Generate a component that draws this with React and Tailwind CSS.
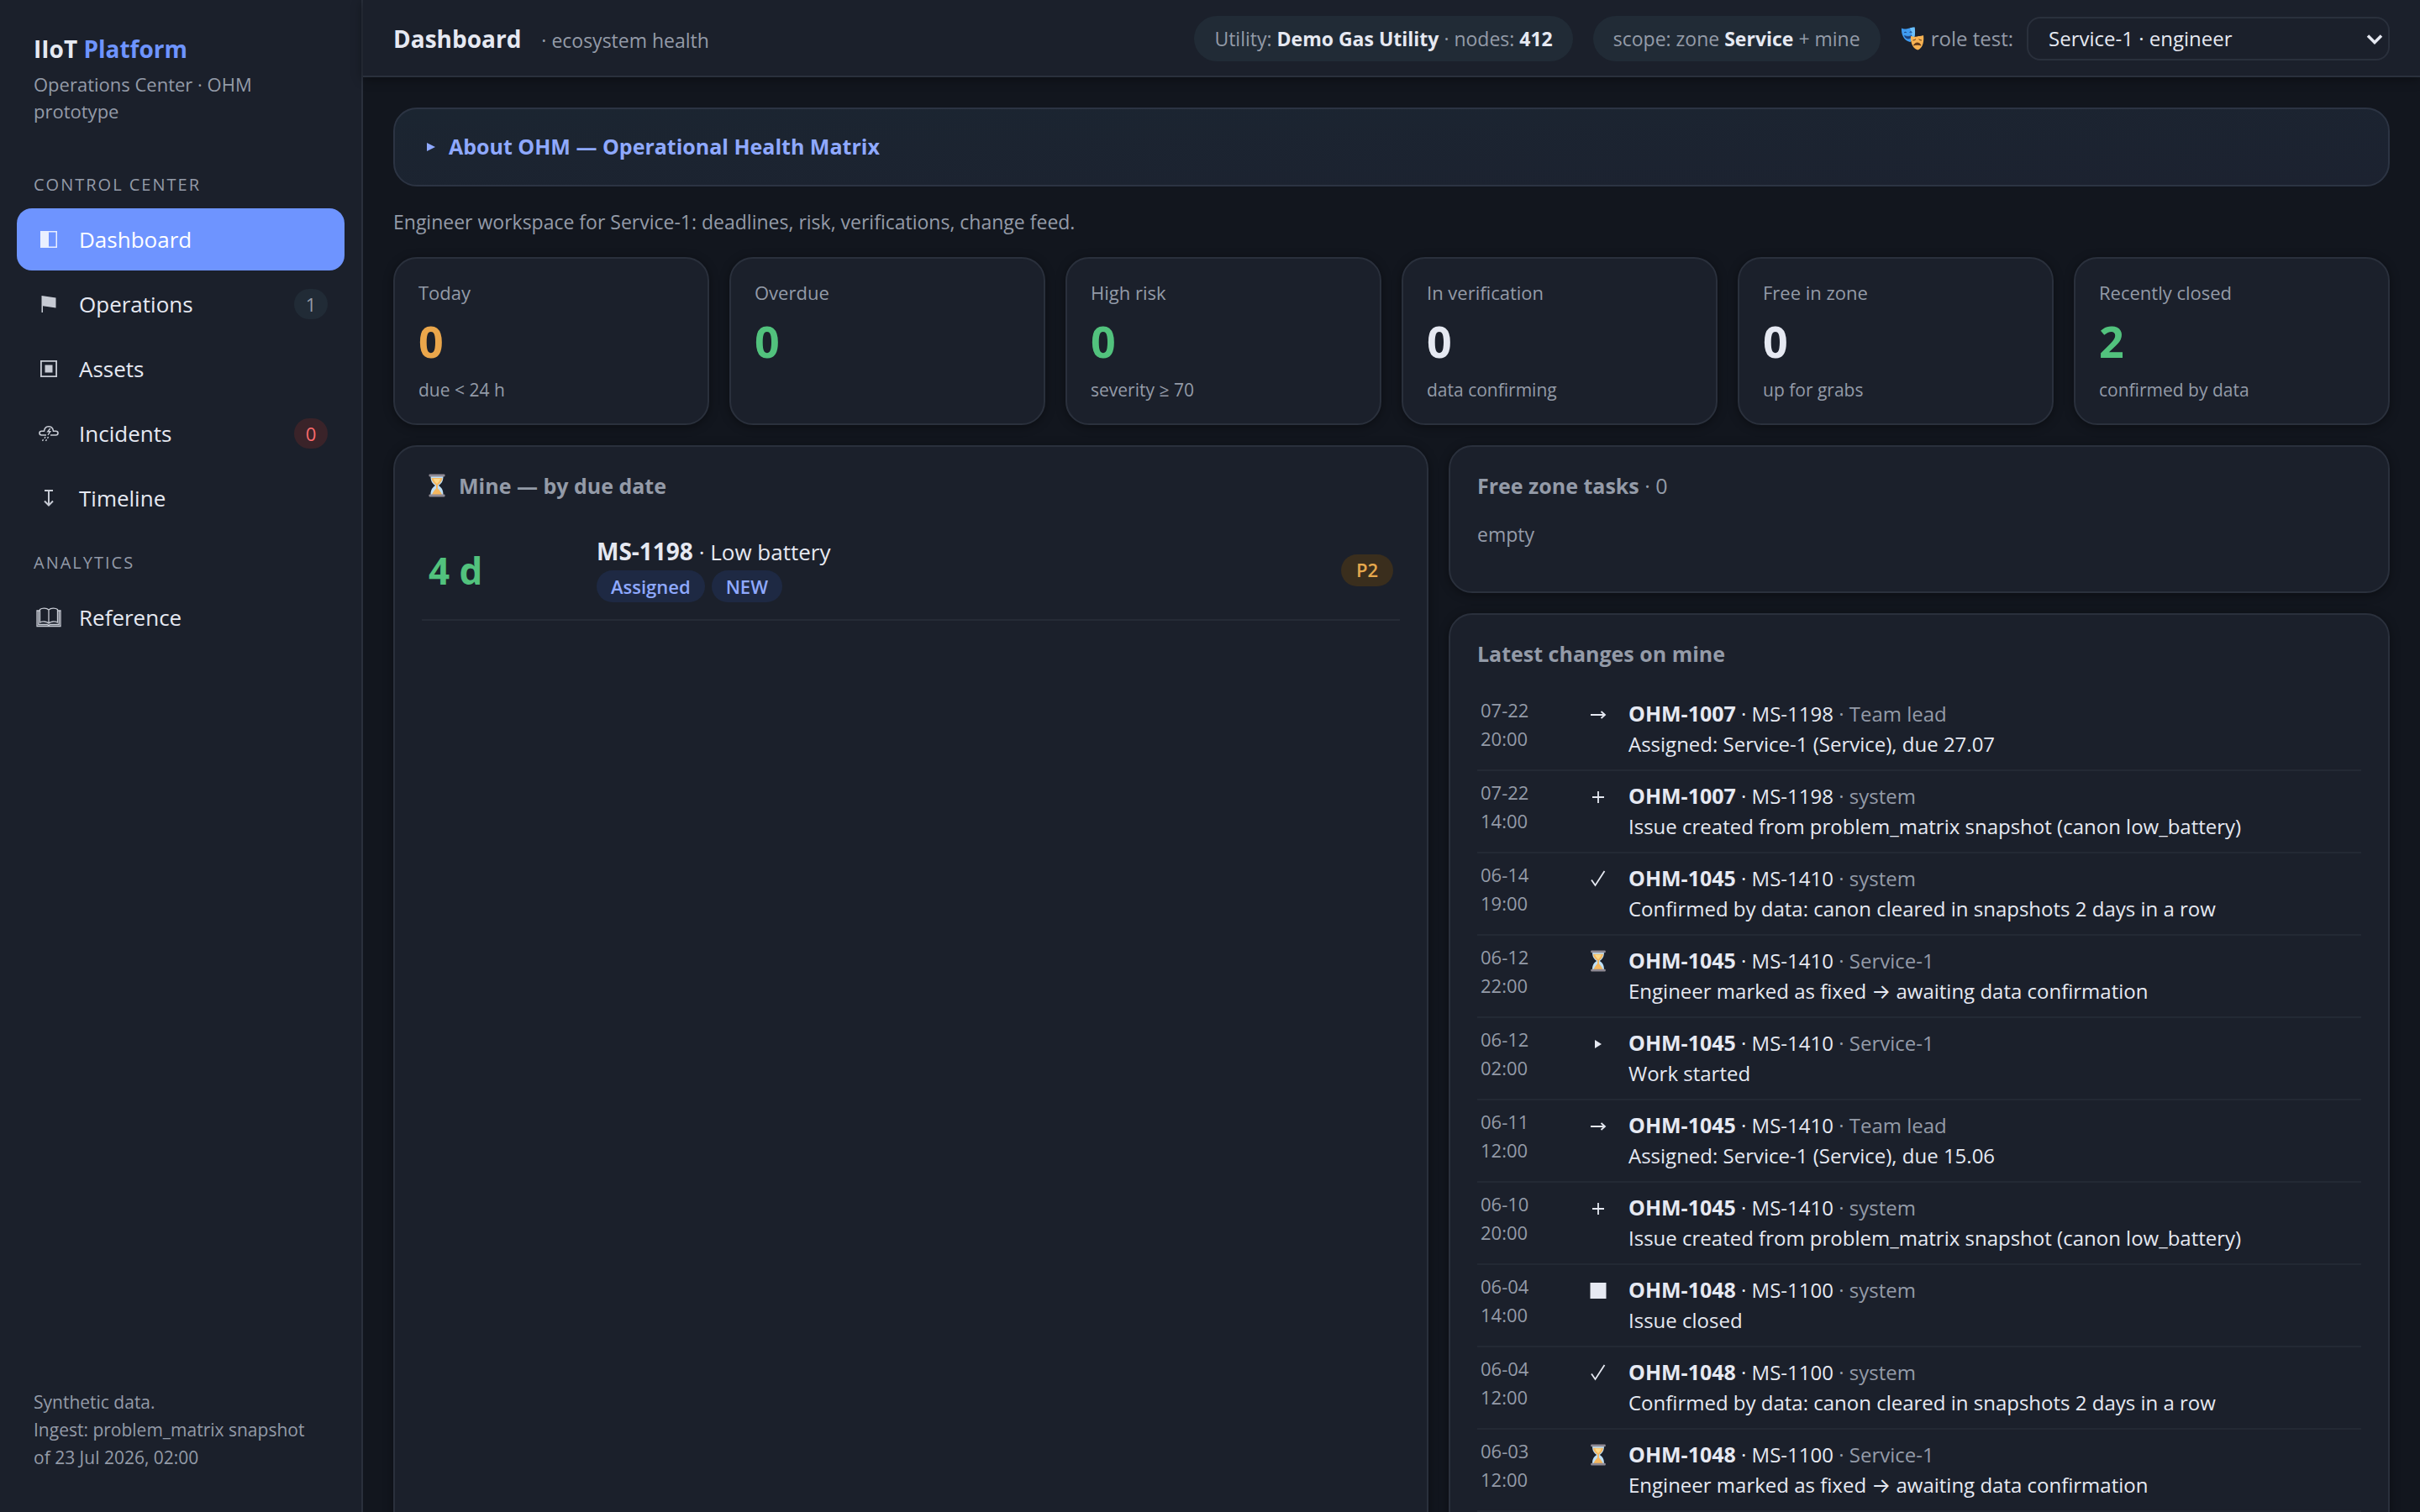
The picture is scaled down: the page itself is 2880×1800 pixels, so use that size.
import { useState } from 'react';

const navGroups = [
  {
    label: 'Control center',
    items: [
      { id: 'dashboard', name: 'Dashboard', Icon: PanelIcon },
      { id: 'operations', name: 'Operations', Icon: FlagIcon, badge: 1 },
      { id: 'assets', name: 'Assets', Icon: AssetIcon },
      { id: 'incidents', name: 'Incidents', Icon: StormIcon, badge: 0, alert: true },
      { id: 'timeline', name: 'Timeline', Icon: TimelineIcon },
    ],
  },
  {
    label: 'Analytics',
    items: [{ id: 'reference', name: 'Reference', Icon: BookIcon }],
  },
];

const stats = [
  { label: 'Today', value: 0, hint: 'due < 24 h', color: 'text-[#eaa64b]' },
  { label: 'Overdue', value: 0, hint: '', color: 'text-[#52c27d]' },
  { label: 'High risk', value: 0, hint: 'severity ≥ 70', color: 'text-[#52c27d]' },
  { label: 'In verification', value: 0, hint: 'data confirming', color: 'text-[#e6e9f2]' },
  { label: 'Free in zone', value: 0, hint: 'up for grabs', color: 'text-[#e6e9f2]' },
  { label: 'Recently closed', value: 2, hint: 'confirmed by data', color: 'text-[#52c27d]' },
];

const created = 'Issue created from problem_matrix snapshot (canon low_battery)';
const confirmed = 'Confirmed by data: canon cleared in snapshots 2 days in a row';
const waiting = 'Engineer marked as fixed → awaiting data confirmation';

const changes = [
  { day: '07-22', time: '20:00', kind: 'assigned', issue: 'OHM-1007', node: 'MS-1198', by: 'Team lead', text: 'Assigned: Service-1 (Service), due 27.07' },
  { day: '07-22', time: '14:00', kind: 'created', issue: 'OHM-1007', node: 'MS-1198', by: 'system', text: created },
  { day: '06-14', time: '19:00', kind: 'confirmed', issue: 'OHM-1045', node: 'MS-1410', by: 'system', text: confirmed },
  { day: '06-12', time: '22:00', kind: 'waiting', issue: 'OHM-1045', node: 'MS-1410', by: 'Service-1', text: waiting },
  { day: '06-12', time: '02:00', kind: 'started', issue: 'OHM-1045', node: 'MS-1410', by: 'Service-1', text: 'Work started' },
  { day: '06-11', time: '12:00', kind: 'assigned', issue: 'OHM-1045', node: 'MS-1410', by: 'Team lead', text: 'Assigned: Service-1 (Service), due 15.06' },
  { day: '06-10', time: '20:00', kind: 'created', issue: 'OHM-1045', node: 'MS-1410', by: 'system', text: created },
  { day: '06-04', time: '14:00', kind: 'closed', issue: 'OHM-1048', node: 'MS-1100', by: 'system', text: 'Issue closed' },
  { day: '06-04', time: '12:00', kind: 'confirmed', issue: 'OHM-1048', node: 'MS-1100', by: 'system', text: confirmed },
  { day: '06-03', time: '12:00', kind: 'waiting', issue: 'OHM-1048', node: 'MS-1100', by: 'Service-1', text: waiting },
];

function PanelIcon() {
  return (
    <svg viewBox="0 0 20 20" className="h-5 w-5" fill="currentColor">
      <path d="M0 0h20v20H0z M10 1.5v17h8.5v-17z" fillRule="evenodd" />
    </svg>
  );
}

function FlagIcon() {
  return (
    <svg viewBox="0 0 20 20" className="h-5 w-5" fill="currentColor">
      <path d="M1.5 0L18.5 2.5V14.5L3 12.2V20H1.5z" />
    </svg>
  );
}

function AssetIcon() {
  return (
    <svg viewBox="0 0 20 20" className="h-5 w-5" fill="currentColor">
      <path d="M0 0h20v20H0z M1.8 1.8v16.4h16.4V1.8z" fillRule="evenodd" />
      <path d="M5.5 5.5h9v9h-9z" />
    </svg>
  );
}

function StormIcon() {
  return (
    <svg viewBox="0 0 24 20" className="h-5 w-6" fill="none" stroke="currentColor" strokeWidth="1.6">
      <path d="M9 12H3.500a2.500 2.400 0 0 1 0-4.800H6.500C7 3.500 9 1.800 12 1.800s5 1.700 5.500 5.400h3a2.500 2.400 0 0 1 0 4.800H14" />
      <path d="M13.800 4l-3 3.800h3l-2.800 4" strokeWidth="1.4" />
      <path d="M8 14l-1 1.800M11.500 14l-1 1.800M5.500 17.200l-1 1.800M9.500 17.200l-1 1.800" strokeWidth="1.4" />
    </svg>
  );
}

function TimelineIcon() {
  return (
    <svg viewBox="0 0 20 20" className="h-5 w-5" fill="none" stroke="currentColor" strokeWidth="2">
      <path d="M5 1h10M10 1v17.500M5 13.500l5 5 5-5" />
    </svg>
  );
}

function BookIcon() {
  return (
    <svg viewBox="0 0 30 24" className="h-6 w-[30px]" fill="none" stroke="currentColor" strokeWidth="1.3">
      <path d="M15 3C12.500.500 7 .500 4.500 2.500v15.500c3-1.500 8-1.500 10.500 1 2.500-2.500 7.500-2.500 10.500-1V2.500C23 .500 17.500.500 15 3zM15 3v16" />
      <path d="M4.500 4H1v18.500h28V4h-3.500M2.800 4v16.500h10.500l1.700 1 1.700-1h10.500V4" />
    </svg>
  );
}

function Hourglass({ className }) {
  return (
    <svg viewBox="0 0 20 28" className={className}>
      <path d="M2.500 3h15c0 5.500-1.500 8-5.500 11 4 3 5.500 5.500 5.500 11h-15c0-5.500 1.500-8 5.500-11C4 11 2.500 8.500 2.500 3z" fill="#bfe0f7" />
      <path d="M3.500 5h13c-.5 4-2.500 6-5.500 8.500v4c2 2 4 4.500 5 7.500h-12c1-3 3-5.500 5-7.500v-4C6 11 4 9 3.500 5z" fill="#f5b75f" />
      <path d="M6 6h8c-.5 2.500-2 4-4 6-2-2-3.500-3.500-4-6z" fill="#fbd98a" />
      <rect x="0.5" y="0.5" width="19" height="3" rx="1" fill="#8f8a94" />
      <rect x="0.5" y="24.5" width="19" height="3" rx="1" fill="#8f8a94" />
    </svg>
  );
}

function Masks() {
  return (
    <svg viewBox="0 0 28 28" className="h-7 w-7">
      <path d="M1 1.500c2 1.300 4 1.300 6.500.8S13 .8 16.500 .5c1 6 1.500 14-5.500 17.500C3.500 16 .5 9 1 1.500z" fill="#3f9bf0" />
      <path d="M11 1.200C13 .8 15 .6 16.500 .5c1 6 1.500 14-5.500 17.500 3-5 3-11 0-16.800z" fill="#6cc0fb" />
      <path d="M4 7c1-1 2-1 3 0M10.500 6.500c1-1 2-1 3 0M4.500 10.500c2.500 1.200 6 1.200 8.500 0-.5 4.500-7 5-8.500 0z" fill="#1b3f78" stroke="#1b3f78" strokeWidth="0.8" />
      <path d="M12 11c3 1 5 .8 7.500.4s4.500-.4 7.500-1.400c1 7-.5 15-6.500 17.500C14 26 11.500 18 12 11z" fill="#f7b252" />
      <path d="M14.500 16c1.500 0 2.500-.5 3.500-1.500M21.500 14.500c1 1 2 1.500 3.500 1.500M15.500 22c1.500-4 7-4 8.500 0-2.500-1-6-1-8.500 0z" fill="#5a3318" stroke="#5a3318" strokeWidth="0.8" />
    </svg>
  );
}

function ChangeIcon({ kind }) {
  if (kind === 'waiting') return <Hourglass className="h-[26px] w-5" />;
  return (
    <svg viewBox="0 0 20 20" className="h-5 w-5" fill="none" stroke="currentColor" strokeWidth="1.8">
      {kind === 'assigned' && <path d="M1 11h17M13.500 7l4.500 4-4.500 4" />}
      {kind === 'created' && <path d="M10 4v14M3 11h14" />}
      {kind === 'confirmed' && <path d="M2 11.500l4.500 6.500L17.500 1" />}
      {kind === 'started' && <path d="M6 6l8 5-8 5z" fill="currentColor" stroke="none" />}
      {kind === 'closed' && <path d="M0.500 1h19v19h-19z" fill="currentColor" stroke="none" />}
    </svg>
  );
}

const Sidebar = ({ active, onSelect }) => (
  <aside className="flex w-[432px] shrink-0 flex-col border-r-2 border-[#2a303c] bg-[#1b202b] px-5 pt-9 pb-12">
    <div className="px-5">
      <div className="text-[28px] leading-11 font-bold">
        IIoT <span className="text-[#6e94ff]">Platform</span>
      </div>
      <div className="mt-1 text-[22px] leading-8 text-[#949ba8]">Operations Center · OHM prototype</div>
    </div>

    <nav className="mt-8">
      {navGroups.map((group) => (
        <div key={group.label} className="pt-6">
          <h2 className="mb-3 px-5 text-[20px] leading-8 tracking-[2px] text-[#949ba8] uppercase">{group.label}</h2>
          <div className="flex flex-col gap-[3px]">
            {group.items.map(({ id, name, Icon, badge, alert }) => (
              <a
                key={id}
                href={`#${id}`}
                onClick={() => onSelect(id)}
                className={
                  active === id
                    ? 'flex h-[74px] items-center rounded-[18px] bg-[#6e94ff] px-5 text-[26px] text-white'
                    : 'flex h-[74px] items-center rounded-[18px] px-5 text-[26px]'
                }
              >
                <span className="flex w-9 justify-center opacity-85">
                  <Icon />
                </span>
                <span className="ml-[18px] flex-1">{name}</span>
                {badge !== undefined && (
                  <span
                    className={
                      alert
                        ? 'flex h-9 min-w-10 items-center justify-center rounded-full bg-[#3a2329] text-[22px] text-[#fa6a6c]'
                        : 'flex h-9 min-w-10 items-center justify-center rounded-full bg-[#212b36] text-[22px] text-[#949ba8]'
                    }
                  >
                    {badge}
                  </span>
                )}
              </a>
            ))}
          </div>
        </div>
      ))}
    </nav>

    <div className="mt-auto px-5 text-[21px] leading-[33px] text-[#949ba8]">
      Synthetic data.
      <br />
      Ingest: problem_matrix snapshot
      <br />
      of 23 Jul 2026, 02:00
    </div>
  </aside>
);

const Header = () => {
  const [role, setRole] = useState('service-1');

  return (
    <header className="flex h-[92px] items-center border-b-2 border-[#2a303c] bg-[#1b202b] px-9 pt-0.5 shadow-[0_2px_12px_rgba(0,0,0,0.4)]">
      <div className="flex items-baseline gap-6">
        <h1 className="text-[28px] font-bold">Dashboard</h1>
        <span className="text-[23px] text-[#949ba8]">· ecosystem health</span>
      </div>
      <div className="ml-auto flex items-center gap-6 text-[23px] text-[#949ba8]">
        <div className="flex h-[54px] items-center rounded-full bg-[#212b36] px-6">
          <span>
            Utility: <b className="text-[#e6e9f2]">Demo Gas Utility</b> · nodes: <b className="text-[#e6e9f2]">412</b>
          </span>
        </div>
        <div className="flex h-[54px] items-center rounded-full bg-[#212b36] px-6">
          <span>
            scope: zone <b className="text-[#e6e9f2]">Service</b> + mine
          </span>
        </div>
        <div className="flex items-center text-[24px]">
          <Masks />
          <label htmlFor="role" className="mr-4 ml-2">
            role test:
          </label>
          <div className="relative">
            <select
              id="role"
              value={role}
              onChange={(e) => setRole(e.target.value)}
              className="h-[52px] w-[432px] appearance-none rounded-2xl border-2 border-[#2a303c] bg-[#1b202b] px-6 text-[24px] text-[#e6e9f2]"
            >
              <option value="service-1">Service-1 · engineer</option>
            </select>
            <svg viewBox="0 0 20 14" className="pointer-events-none absolute top-5 right-2 h-3.5 w-5" fill="none" stroke="#e6e9f2" strokeWidth="3.5">
              <path d="M2 2.500l8 8 8-8" />
            </svg>
          </div>
        </div>
      </div>
    </header>
  );
};

const Card = ({ className, children }) => (
  <section className={`rounded-[28px] border-2 border-[#2a303c] bg-[#1b202b] shadow-[0_2px_12px_rgba(0,0,0,0.4)] ${className}`}>
    {children}
  </section>
);

const MineTable = () => (
  <table className="mt-6 w-full border-collapse">
    <tbody>
      <tr className="border-b-2 border-[#252b36]">
        <td className="w-[208px] pl-2 text-[44px] font-bold text-[#52c27d]">4 d</td>
        <td className="pt-[18px] pb-5">
          <div className="text-[26px] leading-9">
            <b className="text-[28px]">MS-1198</b> · Low battery
          </div>
          <div className="mt-1 flex gap-2 text-[22px] font-semibold text-[#8fa9ff]">
            <span className="flex h-[38px] items-center rounded-full bg-[#1e2943] px-[17px]">Assigned</span>
            <span className="flex h-[38px] items-center rounded-full bg-[#1e2943] px-[17px]">NEW</span>
          </div>
        </td>
        <td className="pr-2">
          <span className="ml-auto flex h-[38px] w-[62px] items-center justify-center rounded-full bg-[#3a2e1d] text-[22px] font-semibold text-[#e5a84d]">
            P2
          </span>
        </td>
      </tr>
    </tbody>
  </table>
);

const ChangesTable = () => (
  <table className="mt-6 w-full border-collapse">
    <tbody>
      {changes.map((c) => (
        <tr key={c.day + c.time} className="border-b-2 border-[#232934] align-top">
          <td className="w-[120px] py-2 pl-1 text-[22px] leading-[34px] text-[#949ba8]">
            {c.day}
            <br />
            {c.time}
          </td>
          <td className="w-[60px] py-3">
            <span className="flex h-9 items-center justify-center pr-3">
              <ChangeIcon kind={c.kind} />
            </span>
          </td>
          <td className="py-3 text-[24px] leading-9">
            <div>
              <b className="text-[25px] leading-8">{c.issue}</b> · {c.node} <span className="text-[#949ba8]">· {c.by}</span>
            </div>
            <div>{c.text}</div>
          </td>
        </tr>
      ))}
    </tbody>
  </table>
);

const App = () => {
  const [active, setActive] = useState('dashboard');

  return (
    <div className="flex h-screen overflow-hidden bg-[#12161e] font-['Open_Sans','Inter',sans-serif] text-[#e6e9f2]">
      <Sidebar active={active} onSelect={setActive} />
      <div className="flex min-w-0 flex-1 flex-col">
        <Header />
        <main className="flex-1 overflow-hidden px-9 pt-9">
          <button
            type="button"
            aria-expanded="false"
            className="flex h-[94px] w-full items-center rounded-[28px] border-2 border-[#2c3443] bg-linear-to-br from-[#1b2531] to-[#1c2230] px-[38px] text-[25px] font-bold text-[#8fa9ff]"
          >
            <svg viewBox="0 0 10 10" className="mr-4 h-2.5 w-2.5" fill="currentColor">
              <path d="M0 0l10 5-10 5z" />
            </svg>
            About OHM — Operational Health Matrix
          </button>

          <p className="my-6 text-[23px] leading-9 text-[#949ba8]">
            Engineer workspace for Service-1: deadlines, risk, verifications, change feed.
          </p>

          <div className="grid grid-cols-6 gap-6">
            {stats.map((s) => (
              <Card key={s.label} className="h-[200px] px-7 pt-6">
                <div className="text-[22px] leading-8 text-[#949ba8]">{s.label}</div>
                <div className={`mt-3 text-[52px] leading-[60px] font-bold ${s.color}`}>{s.value}</div>
                <div className="mt-3 text-[21px] leading-8 text-[#949ba8]">{s.hint}</div>
              </Card>
            ))}
          </div>

          <div className="mt-6 grid grid-cols-[1.1fr_1fr] gap-6">
            <Card className="px-8 pt-7">
              <h2 className="flex items-center gap-4 text-[25px] leading-9 font-bold text-[#949ba8]">
                <Hourglass className="ml-2 h-7 w-5" />
                Mine — by due date
              </h2>
              <MineTable />
            </Card>
            <div className="flex flex-col gap-6">
              <Card className="h-[176px] px-8 pt-7">
                <h2 className="text-[25px] leading-9 font-bold text-[#949ba8]">
                  Free zone tasks <span className="font-normal">· 0</span>
                </h2>
                <p className="mt-[22px] text-[23px] leading-9 text-[#949ba8]">empty</p>
              </Card>
              <Card className="px-8 pt-7 pb-9">
                <h2 className="text-[25px] leading-9 font-bold text-[#949ba8]">Latest changes on mine</h2>
                <ChangesTable />
              </Card>
            </div>
          </div>
        </main>
      </div>
    </div>
  );
};

export default App;
